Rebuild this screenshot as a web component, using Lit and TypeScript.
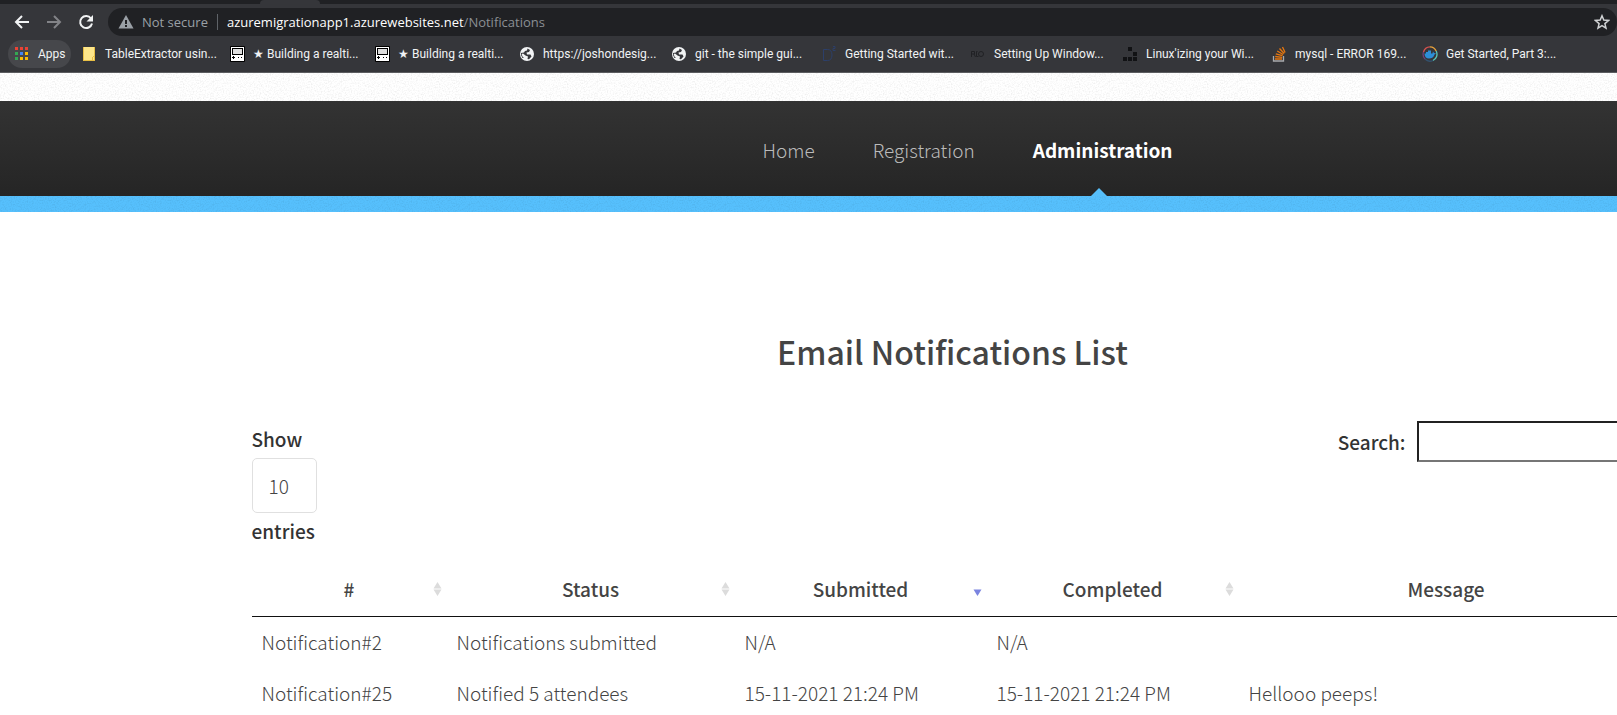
import { LitElement, html, css, svg } from "lit";
import { customElement } from "lit/decorators.js";

const folder = svg`<path fill="#fde68a" d="M2 1h12v14H2z"/><path fill="#e8bf45" d="M2 1h1v14H2zM2 14h12v1H2zM13 1h1v9h-1zM11 11h1v-1h2v5h-3z"/><path fill="#fde68a" d="M12 11h1v3h-1z"/>`;
const device = svg`<rect x="1" width="15" height="16" rx="1" fill="#000"/><rect x="2" y="1" width="13" height="14" fill="#fff"/><rect x="3" y="2" width="11" height="7" fill="#000"/><rect x="4" y="3" width="9" height="5" fill="#ddd"/><path fill="#000" d="M3 11h1v-1h1v1h1v1H5v1H4v-1H3zM9 11h1v1H9zM12 11h1v1h-1z"/>`;
const globe = svg`<circle cx="8" cy="8" r="7" fill="#f1f3f4"/><path fill="#35363a" d="M8.500 2.500 11 4 10 6 7.500 6.500 8 8.500 11.500 8.500 12.500 10.500 10 13.200 8.500 13 9 10.500 6.500 9.500 4 7.500 2.600 8 3.600 10.700 5 12 3.500 12 2 9 2 7 5 6.500 6 5 8 4.500z"/>`;
const dsq = svg`<path fill="none" stroke="#2c3f69" d="M2.500 3.500h4c3 0 4.500 2 4.500 5.500s-1.500 5.500-4.500 5.500h-4zM12 .5h2v2h-2v2h2.500"/>`;
const ro = svg`<path fill="none" stroke="#202124" d="M1.500 11V5.500h3v2.500h-3 M4 8l1.500 3M7.500 5.500h-1v5h2"/><circle cx="11" cy="8" r="2.500" fill="none" stroke="#202124"/>`;
const blocks = svg`<path fill="#111214" d="M6 1h4v4H6zM11 6h4v4h-4zM1 11h4v4H1zM6 11h4v4H6zM11 11h4v4h-4z"/>`;
const stack = svg`<path fill="none" stroke="#a9abad" stroke-width="1.300" d="M2.500 10v5h10v-5"/><path stroke="#e8770e" stroke-width="1.300" d="M4 13h7M4.200 10.500l7 .8M4.800 7.800l6.700 1.900M6.200 5l6 3.500M8.500 2.500l4.700 5M11.500 1l2.600 5.500"/>`;
const docker = svg`<g fill="none" stroke-width="1.300"><path stroke="#d9534f" d="M1.500 6A7 7 0 0 1 8 .8"/><path stroke="#e9a23b" d="M8 .8A7 7 0 0 1 14.200 5"/><path stroke="#5cc8b8" d="M14.200 5A7 7 0 0 1 11 14.500"/><path stroke="#33526f" d="M11 14.500A7 7 0 0 1 3 13"/><path stroke="#70407b" d="M3 13A7 7 0 0 1 1.500 6"/></g><path fill="#2d8fd8" d="M2.500 7.500H4V6h2V4.500h3V7.500h1.500l.5-2 1 1.500 2 .3-1.500 1.200c-1 3-3 4-5.500 4-3 0-4.500-2-4.500-5z"/>`;

const bookmarks = [
  { icon: folder, text: "TableExtractor usin..." },
  { icon: device, text: "★ Building a realti..." },
  { icon: device, text: "★ Building a realti..." },
  { icon: globe, text: "https://joshondesig..." },
  { icon: globe, text: "git - the simple gui..." },
  { icon: dsq, text: "Getting Started wit..." },
  { icon: ro, text: "Setting Up Window..." },
  { icon: blocks, text: "Linux'izing your Wi..." },
  { icon: stack, text: "mysql - ERROR 169..." },
  { icon: docker, text: "Get Started, Part 3:..." },
];

@customElement("browser-chrome")
export class BrowserChrome extends LitElement {
  static styles = css`
    :host {
      display: block;
      background: #35363a;
      border-bottom: 1px solid #5c5d60;
      color: #f1f3f4;
      font: 12px/16px "Open Sans", sans-serif;
    }
    .tabs {
      height: 4px;
      display: flex;
      background: #202124;
    }
    .tab {
      width: 60px;
      margin-left: 260px;
      background: #35363a;
      border-radius: 4px 4px 0 0;
    }
    .toolbar {
      display: flex;
      align-items: center;
      padding: 4px 0 4px 14px;
    }
    .tool {
      width: 16px;
      height: 16px;
      margin-right: 16px;
    }
    button {
      padding: 0;
      border: 0;
      background: none;
      color: inherit;
      font: inherit;
      display: block;
    }
    svg {
      display: block;
      flex: none;
    }
    .omnibox {
      flex: 1;
      min-width: 0;
      height: 28px;
      margin-left: -2px;
      padding: 0 7px 0 10px;
      display: flex;
      align-items: center;
      border-radius: 14px;
      background: #202124;
      font-size: 13px;
    }
    .insecure {
      display: flex;
      align-items: center;
      gap: 8px;
      color: #9aa0a6;
    }
    .rule {
      width: 1px;
      height: 16px;
      margin: 0 9px;
      background: #5f6368;
    }
    .url {
      flex: 1;
      color: #fff;
    }
    .path {
      color: #8b8f94;
    }
    .bookmarks {
      display: flex;
      align-items: center;
      padding: 0 8px 4px;
      white-space: nowrap;
      font-family: Roboto, sans-serif;
    }
    .apps {
      display: flex;
      align-items: center;
      gap: 8px;
      height: 28px;
      width: 63px;
      padding: 0 6px;
      border-radius: 14px;
      background: #46474b;
    }
    .list {
      display: grid;
      grid-template-columns: 148px 145px 145px 152px 150px 149px 152px 149px 151px 150px;
      margin-left: 10px;
    }
    a {
      display: flex;
      align-items: center;
      gap: 8px;
      color: inherit;
      text-decoration: none;
    }
  `;

  render() {
    return html`
      <div class="tabs"><div class="tab"></div></div>
      <div class="toolbar">
        <button class="tool" aria-label="Back">
          <svg width="16" height="16" fill="none" stroke="#f1f3f4" stroke-width="2"><path d="M15 8H2M8 2 2 8l6 6" /></svg>
        </button>
        <button class="tool" aria-label="Forward">
          <svg width="16" height="16" fill="none" stroke="#828387" stroke-width="2"><path d="M1 8h13M8 2l6 6-6 6" /></svg>
        </button>
        <button class="tool" aria-label="Reload">
          <svg width="16" height="16" fill="none" stroke="#f1f3f4" stroke-width="2">
            <path d="M13 4.500A6 6 0 1 0 14 9.500" /><path fill="#f1f3f4" stroke="none" d="M15 1v6.500H8.500z" />
          </svg>
        </button>
        <div class="omnibox">
          <span class="insecure">
            <svg width="16" height="16"><path fill="#9aa0a6" d="M8 1 15.500 14.500H.5z" /><path fill="#202124" d="M7 6h2v4H7zM7 11h2v2H7z" /></svg>
            Not secure
          </span>
          <span class="rule"></span>
          <span class="url">azuremigrationapp1.azurewebsites.net<span class="path">/Notifications</span></span>
          <button aria-label="Bookmark this page">
            <svg width="16" height="16" fill="none" stroke="#d0d2d4" stroke-width="1.500">
              <path d="m8 1.800 1.800 4.300 4.700.4-3.600 3.100 1.100 4.600L8 11.700l-4 2.500 1.100-4.600L1.500 6.500l4.700-.4z" />
            </svg>
          </button>
        </div>
      </div>
      <nav class="bookmarks" aria-label="Bookmarks">
        <button class="apps">
          <svg width="16" height="16">
            <path fill="#ea4335" d="M1 1h3v3H1zM6 1h3v3H6zM11 1h3v3h-3z" />
            <path fill="#34a853" d="M1 6h3v3H1zM1 11h3v3H1z" />
            <path fill="#4285f4" d="M6 6h3v3H6z" />
            <path fill="#fbbc04" d="M11 6h3v3h-3zM6 11h3v3H6zM11 11h3v3h-3z" />
          </svg>
          <span>Apps</span>
        </button>
        <div class="list">
          ${bookmarks.map(
            (b) => html`<a href="#"><svg width="16" height="16">${b.icon}</svg><span>${b.text}</span></a>`
          )}
        </div>
      </nav>
    `;
  }
}

const columns = [
  { name: "#", sort: "both" },
  { name: "Status", sort: "both" },
  { name: "Submitted", sort: "desc" },
  { name: "Completed", sort: "both" },
  { name: "Message", sort: "both" },
];

const rows = [
  ["Notification#2", "Notifications submitted", "N/A", "N/A", ""],
  ["Notification#25", "Notified 5 attendees", "15-11-2021 21:24 PM", "15-11-2021 21:24 PM", "Hellooo peeps!"],
];

@customElement("app-root")
export class AppRoot extends LitElement {
  static styles = css`
    :host {
      display: block;
      height: 100vh;
      overflow: hidden;
      background: #fff;
      color: #444;
      font: 300 19px/30px "Noto Sans CJK SC", sans-serif;
    }
    .page {
      min-width: 1905px;
    }
    .grain {
      background-image: url("data:image/svg+xml,%3Csvg xmlns='http://www.w3.org/2000/svg' width='128' height='128'%3E%3Cfilter id='n' x='0' y='0' width='1' height='1' color-interpolation-filters='sRGB'%3E%3CfeTurbulence type='fractalNoise' baseFrequency='.7' numOctaves='2' stitchTiles='stitch'/%3E%3CfeColorMatrix values='0 0 0 0 0 0 0 0 0 0 0 0 0 0 0 .16 0 0 0 -.07'/%3E%3C/filter%3E%3Crect width='128' height='128' filter='url(%23n)'/%3E%3C/svg%3E");
    }
    .band {
      height: 28px;
      background-color: #fff;
    }
    .accent {
      height: 16px;
      background-color: #56c0fd;
    }
    .menu {
      display: flex;
      justify-content: center;
      gap: 58px;
      padding-left: 30px;
      background: linear-gradient(#333, #252525);
    }
    .menu a {
      display: flex;
      align-items: center;
      height: 95px;
      padding-top: 2px;
      box-sizing: border-box;
      color: #bbb;
      text-decoration: none;
    }
    .menu .current {
      position: relative;
      color: #fff;
      font-weight: 700;
    }
    .current::after {
      content: "";
      position: absolute;
      bottom: 0;
      left: 50%;
      margin-left: -12px;
      border: 8px solid transparent;
      border-top: 0;
      border-bottom-color: #56bffb;
    }
    .container {
      max-width: 1402px;
      margin: 0 auto;
    }
    h2 {
      margin: 0;
      padding: 115px 0 46px;
      text-align: center;
      font-size: 32px;
      line-height: 48px;
      font-weight: 500;
    }
    .controls {
      display: flex;
      justify-content: space-between;
      align-items: flex-start;
      color: #333;
      font-weight: 500;
    }
    .length {
      display: grid;
      justify-items: start;
      padding-top: 3px;
    }
    select {
      appearance: none;
      width: 65px;
      height: 55px;
      margin: 4px 0 3px;
      padding: 0 16px;
      border: 1px solid #e0e0e0;
      border-radius: 5px;
      background: #fff;
      color: #444;
      font: inherit;
      font-weight: 300;
    }
    .search {
      display: flex;
      align-items: center;
      gap: 11px;
    }
    input {
      box-sizing: border-box;
      width: 237px;
      height: 41px;
      border: 2px inset #767676;
      font: inherit;
    }
    table {
      width: 100%;
      margin-top: 16px;
      table-layout: fixed;
      border-collapse: collapse;
    }
    .w0 { width: 195px; }
    .w1 { width: 288px; }
    .w2, .w3 { width: 252px; }
    th {
      position: relative;
      box-sizing: border-box;
      padding: 12px 10px;
      border-bottom: 1px solid #111;
      font-weight: 500;
    }
    td {
      height: 51px;
      box-sizing: border-box;
      padding: 10px;
    }
    .sort {
      position: absolute;
      right: 5px;
      top: 19px;
    }
  `;

  render() {
    return html`
      <browser-chrome></browser-chrome>
      <div class="page">
        <div class="band grain"></div>
        <nav class="menu">
          <a href="#">Home</a>
          <a href="#">Registration</a>
          <a href="#" class="current" aria-current="page">Administration</a>
        </nav>
        <div class="accent grain"></div>
        <main class="container">
          <h2>Email Notifications List</h2>
          <div class="controls">
            <div class="length">
              <label for="length">Show</label>
              <select id="length">
                <option>10</option>
                <option>25</option>
                <option>50</option>
              </select>
              <label for="length">entries</label>
            </div>
            <label class="search">Search: <input type="search" /></label>
          </div>
          <table>
            <thead>
              <tr>
                ${columns.map(
                  (c, i) => html`<th class="w${i}">
                    ${c.name}
                    <svg class="sort" width="9" height="16">
                      ${c.sort === "both"
                        ? svg`<path fill="#dcdcdc" d="M4.500 1 8.500 7.500h-8zM.5 8.500h8L4.500 15z"/>`
                        : svg`<path fill="#7b84e0" d="M.5 8.500h8L4.500 15z"/>`}
                    </svg>
                  </th>`
                )}
              </tr>
            </thead>
            <tbody>
              ${rows.map((r) => html`<tr>${r.map((cell) => html`<td>${cell}</td>`)}</tr>`)}
            </tbody>
          </table>
        </main>
      </div>
    `;
  }
}
